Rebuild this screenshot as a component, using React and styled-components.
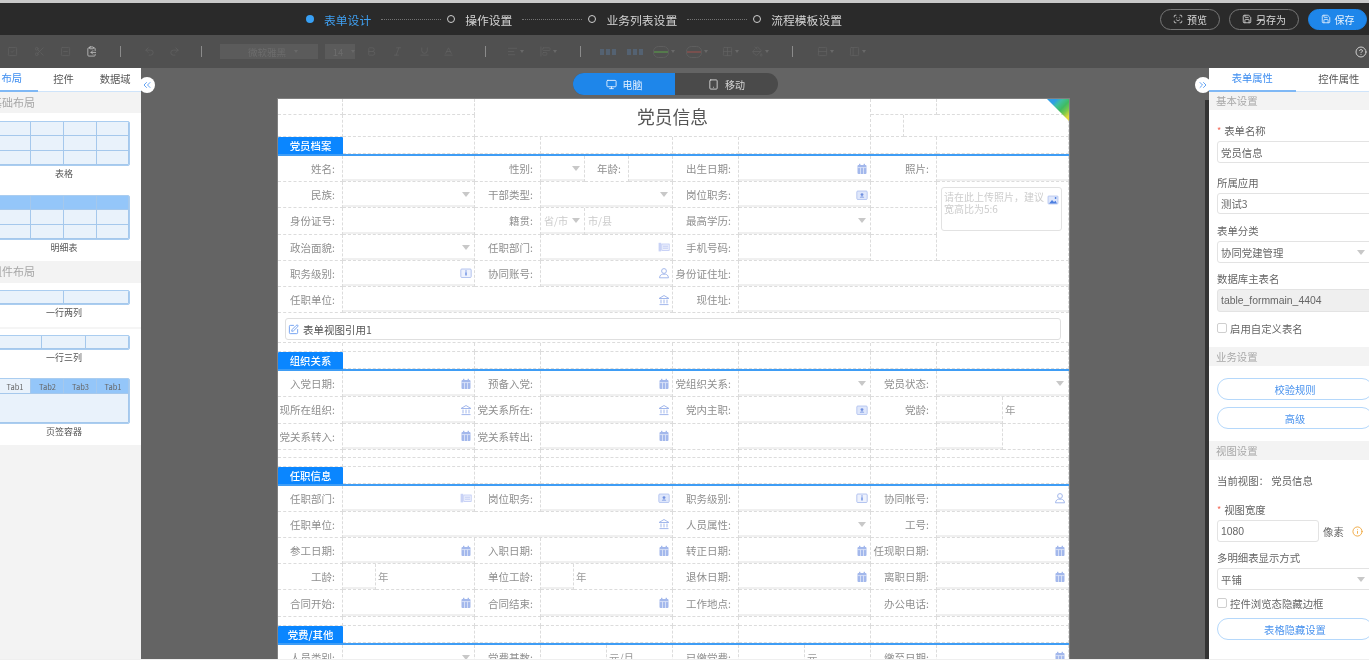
import React from 'react';
import styled, { createGlobalStyle } from 'styled-components';
import { Scissors, Undo2, Redo2, Bold, Italic, Underline, Monitor, Tablet, Save, ScanFace, CircleHelp, SquarePen, SquareCheck, SquareMinus, ClipboardCopy, Baseline, AlignLeft, AlignStartVertical, Grid2x2, PaintBucket, Rows2, PanelLeft, Info, ChevronsLeft, ChevronsRight } from 'lucide-react';

const Global = createGlobalStyle`
  html, body { margin: 0; padding: 0; background: #fff; overflow: hidden; }
  * { box-sizing: border-box; }
  body { font-family: "Noto Sans CJK SC", "Liberation Sans", sans-serif; }
`;

const Root = styled.div`
  width: 1369px; height: 660px; display: flex; flex-direction: column; overflow: hidden;
  background: #fff; filter: blur(0.4px);
`;
const TopStrip = styled.div` height: 3px; background: #c9c9c9; flex: none; `;
const Header = styled.header`
  height: 32px; flex: none; background: #2a2a2a; display: flex; align-items: center; padding: 0 2px 0 306px;
`;
const Steps = styled.div` display: flex; align-items: center; flex: 1; `;
const Dot = styled.i`
  width: 8px; height: 8px; border-radius: 50%; flex: none; margin-right: 10px;
  ${p => p.$active ? 'background:#38a0f5;' : 'border:1.5px solid #cfcfcf; margin-right:10px;'}
`;
const StepText = styled.span` font-size: 11.8px; color: ${p => p.$active ? '#3f9ff0' : '#d4d4d4'}; `;
const Dots = styled.i` width: 60px; flex: none; margin: 0 6px 0 10px; border-top: 1px dotted #747474; `;
const HeadBtn = styled.button`
  height: 21px; width: ${p => p.$w}px; margin-left: 9px; border-radius: 11px; font: inherit; font-size: 10px;
  display: flex; align-items: center; justify-content: center; gap: 4px; padding: 0;
  color: ${p => p.$primary ? '#e6f1fc' : '#d8d8d8'};
  background: ${p => p.$primary ? '#1e86ea' : 'transparent'};
  border: 1px solid ${p => p.$primary ? '#1e86ea' : '#777'};
`;

const Toolbar = styled.div`
  height: 33px; flex: none; background: #505050; display: flex; align-items: center; position: relative;
`;
const Tool = styled.span`
  flex: none; display: flex; align-items: center; justify-content: center; gap: 2px;
  width: ${p => p.$w}px; margin-left: ${p => p.$ml}px; color: ${p => p.$bright ? '#d0d0d0' : '#626262'};
`;
const Sep = styled.i` flex: none; width: 1px; height: 11px; background: #8b8b8b; margin-left: ${p => p.$ml}px; `;
const ToolSelect = styled.span`
  flex: none; height: 15px; width: ${p => p.$w}px; margin-left: ${p => p.$ml}px; background: #5b5b5b; color: #6c6c6c;
  font-size: 9.5px; display: flex; align-items: center; justify-content: center; gap: 8px; padding-left: 8px;
`;
const Caret = styled.i` width: 0; height: 0; border: 2px solid transparent; border-top: 3px solid #696969; border-bottom: 0; `;
const HelpTool = styled.span` margin-left: auto; margin-right: 2px; color: #cfcfcf; display: flex; `;

const Main = styled.div` flex: 1; display: flex; min-height: 0; overflow: hidden; background: #646464; `;
const LeftPanel = styled.aside`
  width: 141px; flex: none; background: #f3f3f3; overflow: hidden; position: relative; z-index: 2;
`;
const PanelInner = styled.div` width: ${p => p.$w}px; margin-left: ${p => p.$ml || 0}px; background: #fff; `;
const Tabs = styled.div` display: flex; height: 24px; background: #fff; border-bottom: 1px solid #cfe4fa; `;
const Tab = styled.div`
  flex: 1; height: 24px; display: flex; align-items: center; justify-content: center; font-size: 10.3px; padding-bottom: 3px;
  color: ${p => p.$active ? '#3d8df0' : '#555'};
  border-bottom: ${p => p.$active ? '2px solid #7fb8f5' : '0'};
`;
const SectionTitle = styled.div`
  height: ${p => p.$h}px; background: #f3f3f3; color: #a6a6a6; font-size: ${p => p.$fs || 10.4}px; display: flex; align-items: center;
  padding-left: ${p => p.$pl || 0}px; margin-top: ${p => p.$mt || 0}px; padding-bottom: 1px;
`;
const LayoutItem = styled.div`
  padding: ${p => p.$pt}px 0 ${p => p.$pb || 0}px 12px;
  border-top: ${p => p.$line ? '2px solid #f5f5f5' : '0'};
`;
const Thumb = styled.div`
  width: 132px; display: grid; grid-template-columns: ${p => p.$cols}; grid-auto-rows: ${p => p.$rh}px;
  border: 1px solid #aacdf0; border-radius: 2px; background: #e9f2fb; overflow: hidden;
`;
const ThumbCell = styled.div`
  background: ${p => p.$head ? '#94c6f9' : '#e9f2fb'}; box-shadow: inset -1px -1px 0 #a5c8ec;
  font-size: 7.5px; color: #666; display: flex; align-items: center; justify-content: center;
  grid-column: ${p => p.$span ? `span ${p.$span}` : 'auto'};
  grid-row: ${p => p.$rows ? `span ${p.$rows}` : 'auto'};
`;
const ThumbLabel = styled.div` height: 16px; width: 132px; text-align: center; font-size: 9px; line-height: 16px; color: #555; `;

const Canvas = styled.main` flex: 1; min-width: 0; position: relative; `;
const Collapse = styled.span`
  position: absolute; top: 9px; width: 16px; height: 16px; border-radius: 50%; background: #fff; color: #3d8df0;
  display: flex; align-items: center; justify-content: center; z-index: 1;
  ${p => p.$right ? 'right: -6px;' : 'left: -2px;'}
`;
const Switcher = styled.div`
  width: 205px; height: 22px; margin: 5px 0 4px 432px; border-radius: 11px; background: #4a4a4a; display: flex; overflow: hidden;
`;
const SwitchItem = styled.div`
  width: ${p => p.$active ? 102 : 103}px; background: ${p => p.$active ? '#1e86ea' : 'transparent'}; color: ${p => p.$active ? '#e5f1ff' : '#d5d5d5'};
  font-size: 10px; display: flex; align-items: center; justify-content: center; gap: 6px;
`;
const Sheet = styled.div`
  width: 791px; margin-left: 137px; background: #fff; position: relative; box-shadow: 0 0 0 1px rgba(255,255,255,.18);
`;
const Corner = styled.i`
  position: absolute; top: 0; right: 0; width: 22px; height: 22px; clip-path: polygon(0 0, 100% 0, 100% 100%);
  background: linear-gradient(135deg, #2f9ee6 0 22%, #3fc0a0 36%, #3fbb62 55%, #7ec94a 72%, #e6d83a 88%);
`;
const FormGrid = styled.div`
  display: grid; grid-template-columns: 65px 132px 66px 132px 66px 132px 66px 132px;
  grid-template-rows: ${p => p.$rows};
  ${p => p.$line ? 'border-bottom: 2px solid #3f9df5;' : ''}
`;
const Cell = styled.div`
  border-right: 1px dashed #dcdcdc; border-bottom: 1px dashed #dcdcdc; min-width: 0;
  grid-column: ${p => p.$span ? `span ${p.$span}` : 'auto'};
`;
const Label = styled(Cell)`
  display: flex; align-items: center; justify-content: flex-end; padding-right: 7px; font-size: 10.5px;
  color: #8f8f8f; white-space: nowrap;
`;
const Field = styled(Cell)`
  display: flex; align-items: center; justify-content: flex-end; padding: 0 2px 0 3px; color: #a3b8ec;
  box-shadow: inset 0 -2px 0 #f0f0f0;
`;
const Arrow = styled.i` width: 0; height: 0; border: 4px solid transparent; border-top: 5px solid #c8c8c8; border-bottom: 0; margin-right: 2px; `;
const Unit = styled(Cell)`
  display: flex; align-items: center; padding-left: 2px; font-size: 10.5px; color: #9a9a9a;
`;
const Hint = styled(Field)` justify-content: space-between; font-size: 10px; color: #cbcbcb; `;
const Split = styled.div`
  display: grid; grid-template-columns: ${p => p.$cols}; min-width: 0;
`;
const Title = styled(Cell)`
  grid-column: 3 / span 4; grid-row: 1 / span 2; display: flex; align-items: center; justify-content: center;
  font-size: 17.8px; color: #555; padding-bottom: 3px;
`;
const SubSplit = styled.div` grid-column: 7 / span 2; display: grid; grid-template-columns: 33px 165px; `;
const Tag = styled.div`
  background: #0a86ff; color: #fff; font-size: 10.4px; font-weight: 500;
  display: flex; align-items: center; justify-content: center; border-radius: 1px 1px 0 0;
`;
const PhotoCell = styled(Cell)` grid-column: 8; grid-row: 2 / span 3; padding: 5px 6px 0 4px; `;
const PhotoBox = styled.div`
  position: relative; height: 44px; border: 1px solid #e2e2e2; border-radius: 3px; padding: 3px 16px 0 2px;
  font-size: 10px; line-height: 12px; color: #cdcdcd;
`;
const PhotoIcon = styled.span` position: absolute; right: 2px; top: 6px; color: #9db4ea; display: flex; `;
const RefRow = styled.div` height: 30px; padding: 5px 8px 3px 7px; border-bottom: 1px dashed #dcdcdc; `;
const RefBox = styled.div`
  height: 22px; border: 1px solid #dfdfdf; border-radius: 3px; display: flex; align-items: center; gap: 4px; padding-left: 2px;
  font-size: 10.5px; color: #555;
  svg { color: #6b9cf0; }
`;

const Strip = styled.div` width: 4px; flex: none; margin-top: 32px; background: #333; `;
const RightPanel = styled.aside` width: 160px; flex: none; background: #fff; overflow: hidden; position: relative; z-index: 2; `;
const PropBody = styled.div` padding-left: 8px; `;
const PropTitle = styled(SectionTitle)` margin-left: -8px; color: #a8a8a8; `;
const PropLabel = styled.div`
  height: 14px; line-height: 14px; font-size: 10.4px; color: #666; margin-top: ${p => p.$mt}px; display: flex; align-items: center;
  white-space: nowrap;
  &[data-req]::before { content: '*'; color: #f36a5a; margin-right: 3px; font-size: 9px; }
`;
const PropInput = styled.div`
  width: ${p => p.$w ?? 156}px; height: ${p => p.$h ?? 22}px; margin-top: ${p => p.$mt ?? 3}px; border: 1px solid #e3e3e3; border-radius: 3px;
  display: flex; align-items: center; justify-content: space-between; padding: 0 5px 0 3px; font-size: 10.4px; color: #666; flex: none;
  background: ${p => p.$off ? '#efefef' : '#fff'};
  font-family: ${p => p.$latin ? '"Liberation Sans", sans-serif' : 'inherit'};
`;
const InlineRow = styled.div` display: flex; align-items: center; gap: 4px; margin-top: 3px; font-size: 10.4px; color: #666; `;
const Check = styled.div`
  display: flex; align-items: center; gap: 3px; height: 14px; margin-top: ${p => p.$mt}px; font-size: 10.4px; color: #666; white-space: nowrap;
`;
const Box = styled.i` width: 10px; height: 10px; flex: none; border: 1px solid #cfcfcf; border-radius: 2px; background: #fff; `;
const PillBtn = styled.div`
  width: 156px; height: 22px; margin-top: ${p => p.$mt}px; border: 1px solid #b5d8fb; border-radius: 11px; display: flex;
  align-items: center; justify-content: center; font-size: 10.3px; color: #4a93ee;
`;
const WarnIcon = styled.span` color: #f0a63c; margin-left: 4px; display: flex; `;
const BottomStrip = styled.div` height: 1px; flex: none; background: #efefef; `;

const Ic = ({ kind }) => {
  const c = 'currentColor';
  const base = { width: 12, height: 12, viewBox: '0 0 12 12', style: { flex: 'none' } };
  if (kind === 'date') return <svg {...base}><rect x="1.5" y="2" width="9" height="9" rx="1" fill={c} /><rect x="3" y="0.8" width="1.4" height="2.4" fill={c} /><rect x="7.6" y="0.8" width="1.4" height="2.4" fill={c} /><path d="M1.5 4.6h9M4.5 4.6v6.4M7.5 4.6v6.4" stroke="#e9eefb" strokeWidth=".7" /></svg>;
  if (kind === 'post') return <svg {...base}><rect x=".8" y="2" width="10.4" height="8.5" rx="1" fill="#dfe7fb" stroke={c} strokeWidth=".7" /><circle cx="6" cy="5.6" r="1.4" fill="#6f8fdf" /><path d="M3.8 8.6c.4-1.4 4-1.4 4.4 0z" fill="#6f8fdf" /></svg>;
  if (kind === 'level') return <svg {...base}><rect x=".8" y="2" width="10.4" height="8.5" rx="1" fill="#eef2fd" stroke={c} strokeWidth=".8" /><path d="M6 3.6v.9M6 5.2v3.2" stroke="#5f86e0" strokeWidth="1.3" /></svg>;
  if (kind === 'dept') return <svg {...base}><rect x=".6" y="1.8" width="2.6" height="8.6" fill="#c8d2f6" /><rect x="3.8" y="3" width="7.4" height="6.4" fill="#eef1fd" stroke="#b6c3f2" strokeWidth=".7" /><path d="M5 5.2h5M5 7.2h5" stroke="#b6c3f2" strokeWidth=".8" /></svg>;
  if (kind === 'person') return <svg {...base}><circle cx="6" cy="4" r="2.4" fill="none" stroke={c} strokeWidth="1" /><path d="M1.5 10.8c.3-2.8 2-3.4 3-3.6h3c1 .2 2.7.8 3 3.6z" fill="none" stroke={c} strokeWidth="1" /></svg>;
  if (kind === 'org') return <svg {...base}><path d="M1 4.5 6 1.5l5 3z" fill="none" stroke={c} strokeWidth="1" /><path d="M3 5.6v3.8M6 5.6v3.8M9 5.6v3.8M1.5 10.6h9" stroke={c} strokeWidth="1" /></svg>;
  if (kind === 'pic') return <svg {...base}><rect x="1" y="2" width="10" height="8" rx=".8" fill="#dfe7fb" stroke={c} strokeWidth=".6" /><path d="M2 9.4 5 6l2 2 1.5-1.2L10 9.4z" fill="#4c7fe0" /><circle cx="8.6" cy="4" r=".9" fill="#4c7fe0" /></svg>;
  return null;
};

const F = (t, span) => ({ c: 'f', t, span });
const L = (t) => ({ c: 'l', t });
const U = (t) => ({ c: 'u', t });
const H = (t, arrow) => ({ c: 'h', t, arrow });
const S = (cols, span, items) => ({ c: 's', cols, span, items });

const renderCell = (d, k) => {
  if (d.c === 'l') return <Label key={k}>{d.t}</Label>;
  if (d.c === 'u') return <Unit key={k}>{d.t}</Unit>;
  if (d.c === 'h') return <Hint key={k}>{d.t}{d.arrow ? <Arrow /> : null}</Hint>;
  if (d.c === 's') return <Split key={k} $cols={d.cols}>{d.items.map(renderCell)}</Split>;
  return <Field key={k} $span={d.span}>{d.t === 'select' ? <Arrow /> : d.t ? <Ic kind={d.t} /> : null}</Field>;
};

const sec1 = [
  L('姓名:'), F(), L('性别:'), S('44px 44px 44px', 0, [F('select'), L('年龄:'), F()]), L('出生日期:'), F('date'), L('照片:'), F(),
  L('民族:'), F('select'), L('干部类型:'), F('select'), L('岗位职务:'), F('post'), L(''),
  L('身份证号:'), F(), L('籍贯:'), S('44px 88px', 0, [H('省/市', true), H('市/县')]), L('最高学历:'), F('select'), L(''),
  L('政治面貌:'), F('select'), L('任职部门:'), F('dept'), L('手机号码:'), F(), L(''),
  L('职务级别:'), F('level'), L('协同账号:'), F('person'), L('身份证住址:'), F('', 3),
  L('任职单位:'), F('org', 3), L('现住址:'), F('', 3),
];
const sec2 = [
  L('入党日期:'), F('date'), L('预备入党:'), F('date'), L('党组织关系:'), F('select'), L('党员状态:'), F('select'),
  L('现所在组织:'), F('org'), L('党关系所在:'), F('org'), L('党内主职:'), F('post'), L('党龄:'), S('66px 66px', 0, [F(), U('年')]),
  L('党关系转入:'), F('date'), L('党关系转出:'), F('date'), L(''), F(), L(''), S('66px 66px', 0, [F(), U('')]),
];
const sec3 = [
  L('任职部门:'), F('dept'), L('岗位职务:'), F('post'), L('职务级别:'), F('level'), L('协同帐号:'), F('person'),
  L('任职单位:'), F('org', 3), L('人员属性:'), F('select'), L('工号:'), F(),
  L('参工日期:'), F('date'), L('入职日期:'), F('date'), L('转正日期:'), F('date'), L('任现职日期:'), F('date'),
  L('工龄:'), S('33px 99px', 0, [F(), U('年')]), L('单位工龄:'), S('33px 99px', 0, [F(), U('年')]), L('退休日期:'), F('date'), L('离职日期:'), F('date'),
  L('合同开始:'), F('date'), L('合同结束:'), F('date'), L('工作地点:'), F(), L('办公电话:'), F(),
];
const sec4 = [
  L('人员类别:'), F('select'), L('党费基数:'), S('66px 66px', 0, [F(), U('元/月')]), L('已缴党费:'), S('66px 66px', 0, [F(), U('元')]), L('缴至日期:'), F('date'),
];

const Head = ({ title }) => (
  <FormGrid $rows="17px" $line>
    <Tag>{title}</Tag>
    {[...Array(7)].map((_, i) => <Cell key={i} />)}
  </FormGrid>
);
const Spacer = ({ h }) => <FormGrid $rows={h}>{[...Array(8)].map((_, i) => <Cell key={i} />)}</FormGrid>;

const px = (n) => Array(n).fill('26.2px').join(' ');

const tools = [
  [12, 14, SquareCheck], [39, 14, Scissors], [65, 14, SquareMinus], [91, 14, ClipboardCopy, true],
  [120, 1, 'sep'], [149, 14, Undo2], [174, 14, Redo2], [201, 1, 'sep'],
  [269, 98, 'font'], [340, 30, 'size'],
  [371, 14, Bold], [397, 14, Italic], [424, 14, Underline], [448, 14, Baseline],
  [485, 1, 'sep'], [515, 20, AlignLeft, false, true], [548, 20, AlignStartVertical, false, true], [580, 1, 'sep'],
  [608, 16, 'b1'], [635, 16, 'b2'], [664, 24, 'b3'], [697, 24, 'b4'], [730, 20, Grid2x2, false, true], [760, 20, PaintBucket, false, true],
  [792, 1, 'sep'], [825, 20, Rows2, false, true], [857, 20, PanelLeft, false, true],
];

const SquareDots = ({ color }) => (
  <svg width="16" height="6" viewBox="0 0 16 6"><path d="M0 0h4v6H0zM6 0h4v6H6zM12 0h4v6h-4z" fill={color} /></svg>
);
const Ring = ({ color }) => (
  <>
    <svg width="16" height="12" viewBox="0 0 16 12"><rect x=".5" y=".5" width="15" height="11" rx="5" fill="none" stroke="#5e5e5e" /><path d="M1 6h14" stroke={color} strokeWidth="2" /></svg>
    <Caret />
  </>
);

const ToolRow = () => {
  let cur = 0;
  return tools.map(([x, w, I, bright, caret], i) => {
    const ml = x - w / 2 - cur;
    cur = x + w / 2;
    if (I === 'sep') return <Sep key={i} $ml={ml} />;
    if (I === 'font') return <ToolSelect key={i} $w={w} $ml={ml}>微软雅黑<Caret /></ToolSelect>;
    if (I === 'size') return <ToolSelect key={i} $w={w} $ml={ml}>14<Caret /></ToolSelect>;
    if (I === 'b1' || I === 'b2') return <Tool key={i} $w={w} $ml={ml}><SquareDots color="#546272" /></Tool>;
    if (I === 'b3') return <Tool key={i} $w={w} $ml={ml}><Ring color="#557a4c" /></Tool>;
    if (I === 'b4') return <Tool key={i} $w={w} $ml={ml}><Ring color="#78504e" /></Tool>;
    return <Tool key={i} $w={w} $ml={ml} $bright={bright}><I size={11} strokeWidth={1.6} />{caret && <Caret />}</Tool>;
  });
};

const c4 = '32px 33px 33px 32px';
const Table = ({ head }) => (
  <Thumb $cols={c4} $rh={14.33}>
    {[...Array(12)].map((_, i) => <ThumbCell key={i} $head={head && i < 4} />)}
  </Thumb>
);

export default function App() {
  return (
    <Root>
      <Global />
      <TopStrip />
      <Header>
        <Steps>
          <Dot $active /><StepText $active>表单设计</StepText><Dots />
          <Dot /><StepText>操作设置</StepText><Dots />
          <Dot /><StepText>业务列表设置</StepText><Dots />
          <Dot /><StepText>流程模板设置</StepText>
        </Steps>
        <HeadBtn $w={60}><ScanFace size={10} />预览</HeadBtn>
        <HeadBtn $w={70}><Save size={10} />另存为</HeadBtn>
        <HeadBtn $w={59} $primary><Save size={10} />保存</HeadBtn>
      </Header>
      <Toolbar>
        <ToolRow />
        <HelpTool><CircleHelp size={12} /></HelpTool>
      </Toolbar>
      <Main>
        <LeftPanel>
          <PanelInner $w={155} $ml={-14}>
            <Tabs>
              <Tab $active>布局</Tab><Tab>控件</Tab><Tab>数据域</Tab>
            </Tabs>
            <SectionTitle $h={21} $pl={5} $fs={11}>基础布局</SectionTitle>
            <LayoutItem $pt={8}><Table /><ThumbLabel>表格</ThumbLabel></LayoutItem>
            <LayoutItem $pt={13} $pb={5}><Table head /><ThumbLabel>明细表</ThumbLabel></LayoutItem>
            <SectionTitle $h={22} $pl={5} $fs={11}>组件布局</SectionTitle>
            <LayoutItem $pt={7} $pb={6}>
              <Thumb $cols="1fr 1fr" $rh={13}><ThumbCell /><ThumbCell /></Thumb><ThumbLabel>一行两列</ThumbLabel>
            </LayoutItem>
            <LayoutItem $pt={6} $pb={12} $line>
              <Thumb $cols="43px 44px 1fr" $rh={13}><ThumbCell /><ThumbCell /><ThumbCell /></Thumb><ThumbLabel>一行三列</ThumbLabel>
            </LayoutItem>
            <LayoutItem $pt={0} $pb={5}>
              <Thumb $cols={c4} $rh={14.67}>
                <ThumbCell>Tab1</ThumbCell><ThumbCell $head>Tab2</ThumbCell><ThumbCell $head>Tab3</ThumbCell><ThumbCell $head>Tab1</ThumbCell>
                <ThumbCell $span={4} $rows={2} />
              </Thumb>
              <ThumbLabel>页签容器</ThumbLabel>
            </LayoutItem>
          </PanelInner>
        </LeftPanel>
        <Canvas>
          <Collapse><ChevronsLeft size={12} strokeWidth={1.6} /></Collapse>
          <Collapse $right><ChevronsRight size={12} strokeWidth={1.6} /></Collapse>
          <Switcher>
            <SwitchItem $active><Monitor size={11} />电脑</SwitchItem>
            <SwitchItem><Tablet size={11} />移动</SwitchItem>
          </Switcher>
          <Sheet>
            <Corner />
            <FormGrid $rows="16px 22px">
              <Cell /><Cell /><Title>党员信息</Title><Cell /><Cell />
              <Cell /><Cell />
              <SubSplit><Cell /><Cell /></SubSplit>
            </FormGrid>
            <Head title="党员档案" />
            <FormGrid $rows={px(6)}>
              <PhotoCell>
                <PhotoBox>
                  请在此上传照片，建议宽高比为5:6
                  <PhotoIcon><Ic kind="pic" /></PhotoIcon>
                </PhotoBox>
              </PhotoCell>
              {sec1.map(renderCell)}
            </FormGrid>
            <RefRow><RefBox><SquarePen size={11} />表单视图引用1</RefBox></RefRow>
            <Spacer h="9px" />
            <Head title="组织关系" />
            <FormGrid $rows={px(3)}>{sec2.map(renderCell)}</FormGrid>
            <Spacer h="8px" />
            <Spacer h="9px" />
            <Head title="任职信息" />
            <FormGrid $rows={px(5)}>{sec3.map(renderCell)}</FormGrid>
            <Spacer h="9px" />
            <Head title="党费/其他" />
            <FormGrid $rows={px(1)}>{sec4.map(renderCell)}</FormGrid>
          </Sheet>
        </Canvas>
        <Strip />
        <RightPanel>
          <PanelInner $w={173}>
            <Tabs><Tab $active>表单属性</Tab><Tab>控件属性</Tab></Tabs>
            <PropBody>
              <PropTitle $h={18} $pl={7}>基本设置</PropTitle>
              <PropLabel $mt={14} data-req>表单名称</PropLabel>
              <PropInput>党员信息</PropInput>
              <PropLabel $mt={13}>所属应用</PropLabel>
              <PropInput $h={21}>测试3</PropInput>
              <PropLabel $mt={10}>表单分类</PropLabel>
              <PropInput>协同党建管理<Arrow /></PropInput>
              <PropLabel $mt={9}>数据库主表名</PropLabel>
              <PropInput $h={23} $off $latin>table_formmain_4404</PropInput>
              <Check $mt={9}><Box />启用自定义表名</Check>
              <PropTitle $h={19} $pl={7} $mt={12}>业务设置</PropTitle>
              <PillBtn $mt={12}>校验规则</PillBtn>
              <PillBtn $mt={7}>高级</PillBtn>
              <PropTitle $h={19} $pl={7} $mt={12}>视图设置</PropTitle>
              <PropLabel $mt={14}>当前视图：&nbsp;党员信息</PropLabel>
              <PropLabel $mt={15} data-req>视图宽度</PropLabel>
              <InlineRow>
                <PropInput $w={102} $mt={0} $latin>1080</PropInput>像素
                <WarnIcon><Info size={11} /></WarnIcon>
              </InlineRow>
              <PropLabel $mt={9}>多明细表显示方式</PropLabel>
              <PropInput>平铺<Arrow /></PropInput>
              <Check $mt={6}><Box />控件浏览态隐藏边框</Check>
              <PillBtn $mt={8}>表格隐藏设置</PillBtn>
            </PropBody>
          </PanelInner>
        </RightPanel>
      </Main>
      <BottomStrip />
    </Root>
  );
}
